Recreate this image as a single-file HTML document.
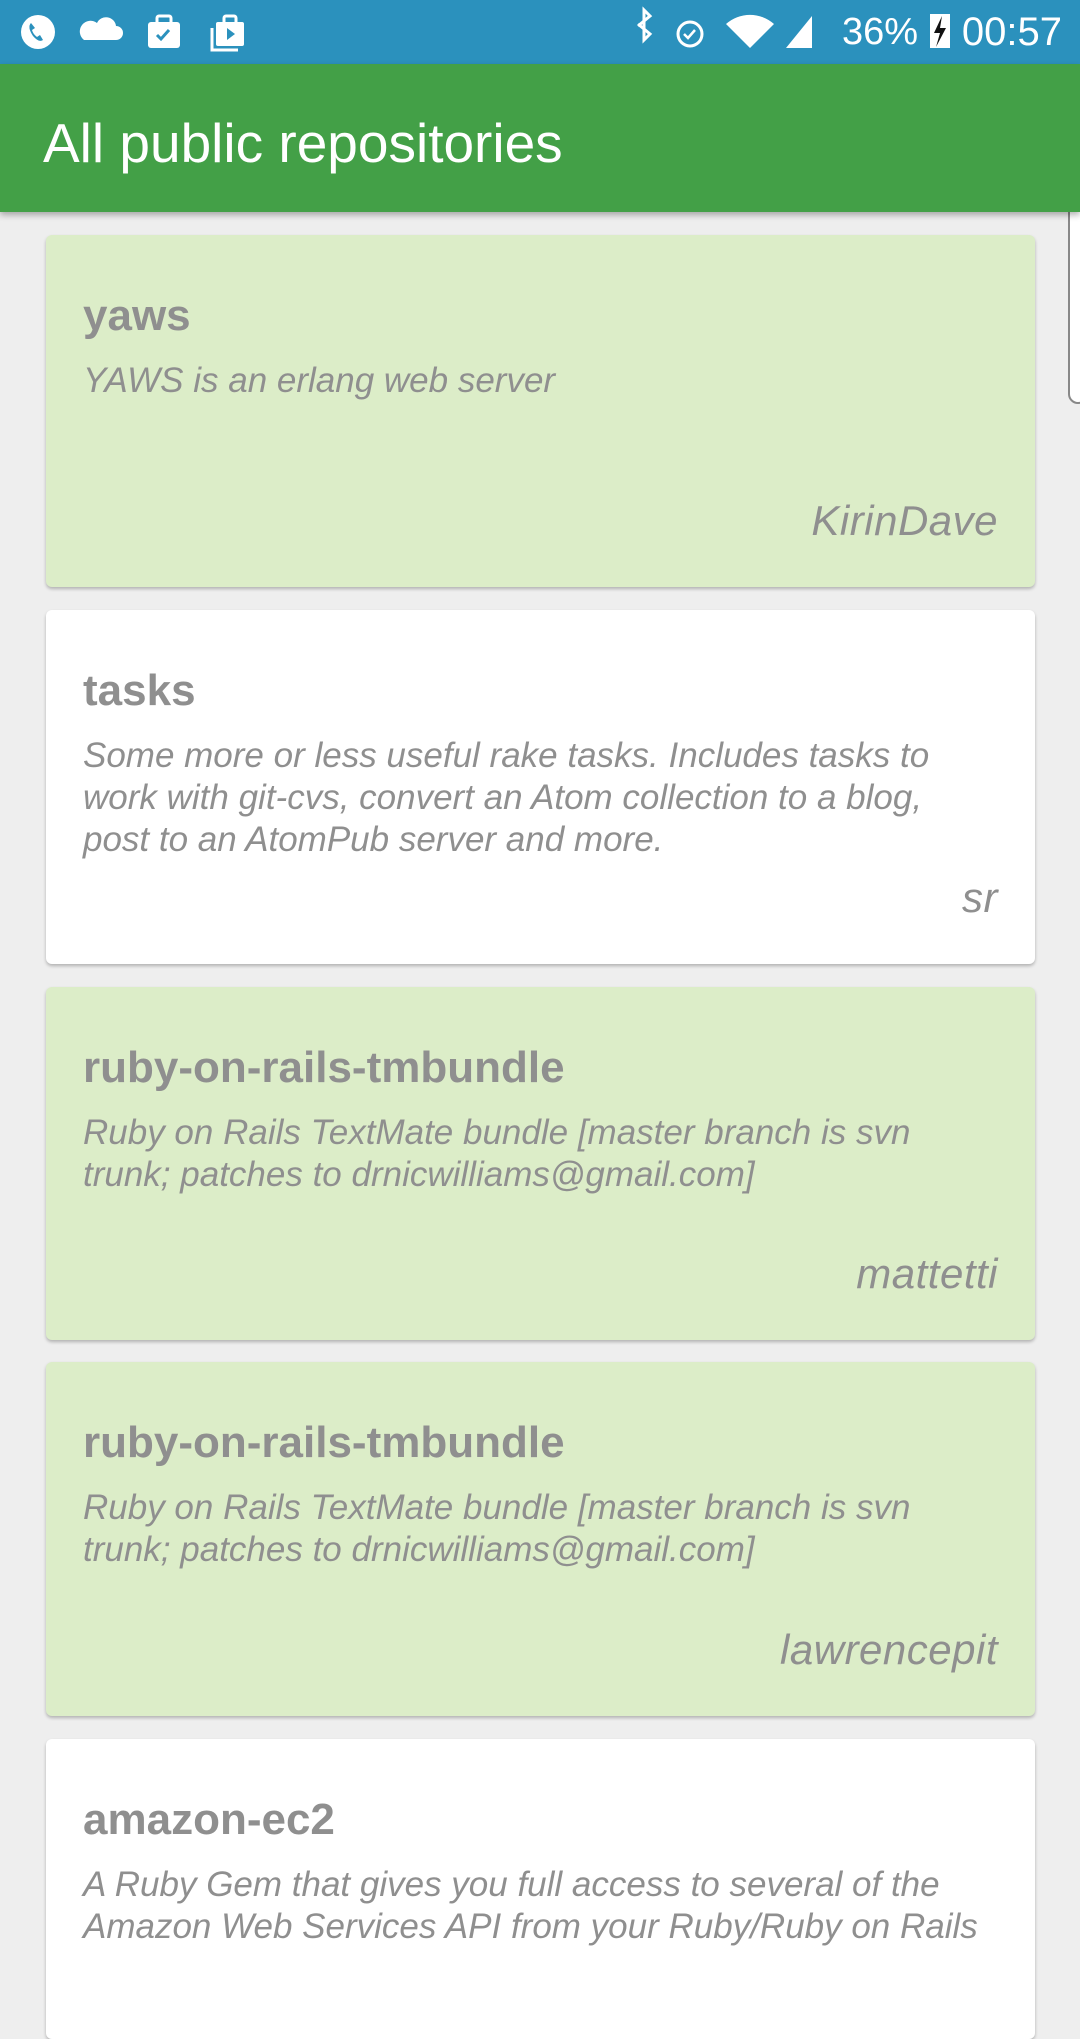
<!DOCTYPE html>
<html><head><meta charset="utf-8"><style>
*{margin:0;padding:0;box-sizing:border-box}
body{width:1080px;height:1920px;overflow:hidden;background:#eeeeee;font-family:"Liberation Sans",sans-serif;position:relative}
.sb{position:absolute;top:0;left:0;width:1080px;height:64px;background:#2b91bd;color:#fff}
.tb{position:absolute;top:64px;left:0;width:1080px;height:148px;background:#43a047;box-shadow:0 3px 6px rgba(0,0,0,.3);z-index:2}
.tb div{position:absolute;left:43px;top:51px;font-size:55px;line-height:56px;color:#fff}
.card{position:absolute;left:46px;width:989px;border-radius:6px;box-shadow:0 2px 3px rgba(0,0,0,.25);overflow:hidden}
.g{background:#dcedc8}.w{background:#fff}
.t{position:absolute;left:37px;top:56px;font-size:44px;line-height:50px;font-weight:bold;color:#8f8f8f;white-space:nowrap}
.d{position:absolute;left:37px;top:125px;width:885px;font-size:35px;line-height:42px;font-style:italic;color:#8f8f8f}
.a{position:absolute;right:37px;bottom:42px;font-size:42px;line-height:48px;letter-spacing:0.5px;font-style:italic;color:#8f8f8f}
</style></head><body>
<div class="sb">
<svg width="1080" height="64" style="position:absolute;left:0;top:0">
<circle cx="38" cy="32" r="17" fill="#fff"/>
<path d="M31 23 q-4 4 2 13 q6 7 10 4 l-3 -5 -3 2 q-4 -3 -5 -7 l3 -2z" fill="#2b91bd"/>
<path d="M84 40 h32 a7 7 0 0 0 0 -14 a10 10 0 0 0 -19 -3 a8 8 0 0 0 -13 17z" fill="#fff"/>
<rect x="148" y="22" width="32" height="26" rx="3" fill="#fff"/><rect x="157" y="16" width="14" height="8" rx="2" fill="none" stroke="#fff" stroke-width="3"/>
<path d="M157 35 l4 4 8 -9" stroke="#2b91bd" stroke-width="3" fill="none"/>
<rect x="216" y="22" width="28" height="24" rx="2" fill="#fff"/><rect x="224" y="16" width="12" height="8" rx="2" fill="none" stroke="#fff" stroke-width="3"/>
<path d="M212 28 v22 h26" stroke="#fff" stroke-width="3" fill="none"/><path d="M227 28 l8 6 -8 6z" fill="#2b91bd"/>
<path d="M638 24 l12 10 -6 6 v-30 l6 6 -12 10" stroke="#fff" stroke-width="3" fill="none"/>
<circle cx="690" cy="34" r="12" fill="none" stroke="#fff" stroke-width="3"/><path d="M684 34 l4 4 7 -8" stroke="#fff" stroke-width="2.5" fill="none"/>
<path d="M726 24 a36 36 0 0 1 48 0 l-24 24z" fill="#fff"/>
<path d="M786 48 l26 -32 v32z" fill="#fff"/>
<rect x="930" y="14" width="20" height="34" fill="#fff"/><path d="M942 16 l-8 17 h6 l-4 14 10 -19 h-6z" fill="#111"/>
</svg>
<div style="position:absolute;left:842px;top:10px;font-size:38px;line-height:44px;color:#fff">36%</div>
<div style="position:absolute;right:18px;top:10px;font-size:40px;line-height:44px;color:#fff">00:57</div>
</div>
<div class="tb"><div>All public repositories</div></div>
<div style="position:absolute;left:1068px;top:172px;width:20px;height:232px;border:2px solid #888;border-radius:10px;background:#fff"></div>
<div class="card g" style="top:235px;height:352px"><div class="t">yaws</div><div class="d">YAWS is an erlang web server</div><div class="a">KirinDave</div></div>
<div class="card w" style="top:610px;height:354px"><div class="t">tasks</div><div class="d">Some more or less useful rake tasks. Includes tasks to work with git-cvs, convert an Atom collection to a blog, post to an AtomPub server and more.</div><div class="a">sr</div></div>
<div class="card g" style="top:987px;height:353px"><div class="t">ruby-on-rails-tmbundle</div><div class="d">Ruby on Rails TextMate bundle [master branch is svn trunk; patches to drnicwilliams@gmail.com]</div><div class="a">mattetti</div></div>
<div class="card g" style="top:1362px;height:354px"><div class="t">ruby-on-rails-tmbundle</div><div class="d">Ruby on Rails TextMate bundle [master branch is svn trunk; patches to drnicwilliams@gmail.com]</div><div class="a">lawrencepit</div></div>
<div class="card w" style="top:1739px;height:300px"><div class="t">amazon-ec2</div><div class="d" style="width:1000px">A Ruby Gem that gives you full access to several of the<br>Amazon Web Services API from your Ruby/Ruby on Rails</div></div>
</body></html>
